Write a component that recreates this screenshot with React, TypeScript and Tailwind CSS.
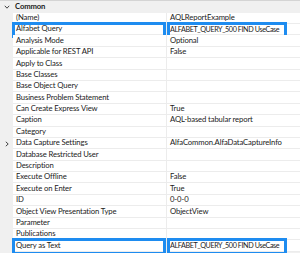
import React from 'react';

type Row = { name: string; value?: string; expand?: boolean; mark?: boolean };

const ROWS: Row[] = [
  { name: '(Name)', value: 'AQLReportExample' },
  { name: 'Alfabet Query', value: 'ALFABET_QUERY_500 FIND UseCase', mark: true },
  { name: 'Analysis Mode', value: 'Optional' },
  { name: 'Applicable for REST API', value: 'False' },
  { name: 'Apply to Class' },
  { name: 'Base Classes' },
  { name: 'Base Object Query' },
  { name: 'Business Problem Statement' },
  { name: 'Can Create Express View', value: 'True' },
  { name: 'Caption', value: 'AQL-based tabular report' },
  { name: 'Category' },
  { name: 'Data Capture Settings', value: 'AlfaCommon.AlfaDataCaptureInfo', expand: true },
  { name: 'Database Restricted User' },
  { name: 'Description' },
  { name: 'Execute Offline', value: 'False' },
  { name: 'Execute on Enter', value: 'True' },
  { name: 'ID', value: '0-0-0' },
  { name: 'Object View Presentation Type', value: 'ObjectView' },
  { name: 'Parameter' },
  { name: 'Publications' },
  { name: 'Query as Text', value: 'ALFABET_QUERY_500 FIND UseCase', mark: true },
];

function Chevron({ open }: { open?: boolean }) {
  return (
    <svg width="6" height="6" viewBox="0 0 6 6" className={open ? '' : '-rotate-90'}>
      <path d="M0.8 1.8 L3 4.2 L5.2 1.8" fill="none" stroke="#444" strokeWidth="1" />
    </svg>
  );
}

export default function App() {
  return (
    <div className="w-[300px] h-[253px] overflow-hidden bg-[#f0f0f0] border-t border-[#d4d4d4] text-[#1b1b1b] text-[7.7px] tracking-[-0.12px] leading-none font-['Lato',sans-serif]">
      {/* Category header */}
      <div className="flex items-center h-[11.6px]">
        <div className="w-[13px] flex items-center justify-center">
          <Chevron open />
        </div>
        <span className="font-bold pl-[2px]">Common</span>
      </div>

      {ROWS.map(r => (
        <div key={r.name} className="relative flex h-[11.4px]">
          <div className="w-[13px] flex items-center justify-center shrink-0">
            {r.expand && <Chevron />}
          </div>
          <div className="w-[154px] shrink-0 bg-white border-b border-r border-[#ececec] flex items-center pl-[3px] whitespace-nowrap overflow-hidden">
            {r.name}
          </div>
          <div className={`flex-1 bg-white border-b border-[#ececec] flex items-center pl-[3px] whitespace-nowrap overflow-hidden ${r.mark ? 'text-[7.2px] tracking-[-0.4px]' : ''}`}>
            {r.value}
          </div>
          {r.mark && (
            <>
              <div className="absolute left-[12px] w-[154px] -top-[2px] -bottom-[3px] border-[3px] border-[#1e8cf0]" />
              <div className="absolute left-[167px] right-[13px] -top-[2px] -bottom-[3px] border-[3px] border-[#1e8cf0]" />
            </>
          )}
        </div>
      ))}
    </div>
  );
}
